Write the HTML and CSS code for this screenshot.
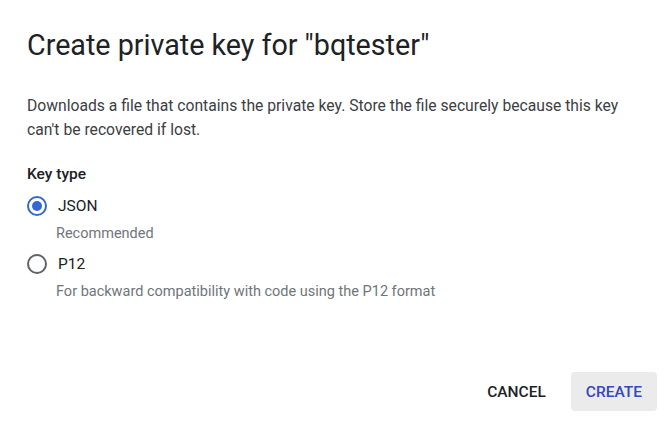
FILE: index.html
```html
<!DOCTYPE html>
<html lang="en">
<head>
    <meta charset="UTF-8">
    <title>Create private key</title>
    <meta name="viewport" content="width=device-width, initial-scale=1">
    <link rel="stylesheet" href="styles.css">
</head>
<body>
    <div class="dialog">
        <h1 class="dialog-title">Create private key for "bqtester"</h1>
        <p class="dialog-text">Downloads a file that contains the private key. Store the file securely because this key can't be recovered if lost.</p>

        <div class="key-type">
            <div class="key-type-label">Key type</div>

            <label class="option">
                <span class="radio checked"></span>
                <span class="option-name">JSON</span>
            </label>
            <div class="option-hint">Recommended</div>

            <label class="option">
                <span class="radio"></span>
                <span class="option-name">P12</span>
            </label>
            <div class="option-hint">For backward compatibility with code using the P12 format</div>
        </div>

        <div class="actions">
            <button class="btn btn-cancel">CANCEL</button>
            <button class="btn btn-create">CREATE</button>
        </div>
    </div>
</body>
</html>
```

FILE: styles.css
```css
body {
    margin: 0;
    background: #fff;
    font-family: Roboto, "Liberation Sans", sans-serif;
    color: #202124;
}
.dialog {
    width: 670px;
    height: 429px;
    box-sizing: border-box;
    padding: 29px 13px 0 27px;
    display: flex;
    flex-direction: column;
}
.dialog-title {
    margin: 0;
    font-size: 28.7px;
    font-weight: 400;
    line-height: 32px;
}
.dialog-text {
    max-width: 605px;
    margin: 33px 0 0;
    font-size: 15.7px;
    line-height: 24px;
    color: #3c4043;
}
.key-type {
    margin-top: 20px;
}
.key-type-label {
    font-size: 15.5px;
    font-weight: 500;
    line-height: 24px;
    color: #202124;
}
.option {
    display: flex;
    align-items: center;
    gap: 11px;
    height: 30px;
    margin-top: 5px;
}
.radio {
    width: 20px;
    height: 20px;
    box-sizing: border-box;
    border: 2px solid #5f6368;
    border-radius: 50%;
    display: flex;
    align-items: center;
    justify-content: center;
}
.radio.checked {
    border-color: #3367d6;
}
.radio.checked::after {
    content: "";
    width: 10px;
    height: 10px;
    border-radius: 50%;
    background: #3367d6;
}
.option-name {
    font-size: 15.5px;
    color: #202124;
}
.option-hint {
    margin-left: 29px;
    font-size: 14.5px;
    line-height: 21px;
    color: #70757a;
    margin-top: 2px;
}
.actions {
    margin-top: auto;
    margin-bottom: 18px;
    display: flex;
    justify-content: flex-end;
    gap: 10px;
}
.btn {
    font-family: Roboto, "Liberation Sans", sans-serif;
    font-size: 15.5px;
    font-weight: 500;
    height: 39px;
    padding: 0 15px;
    border: none;
    border-radius: 4px;
    background: none;
    cursor: pointer;
}
.btn-cancel {
    color: #202124;
}
.btn-create {
    background: #ebebeb;
    color: #3446c0;
}
```
